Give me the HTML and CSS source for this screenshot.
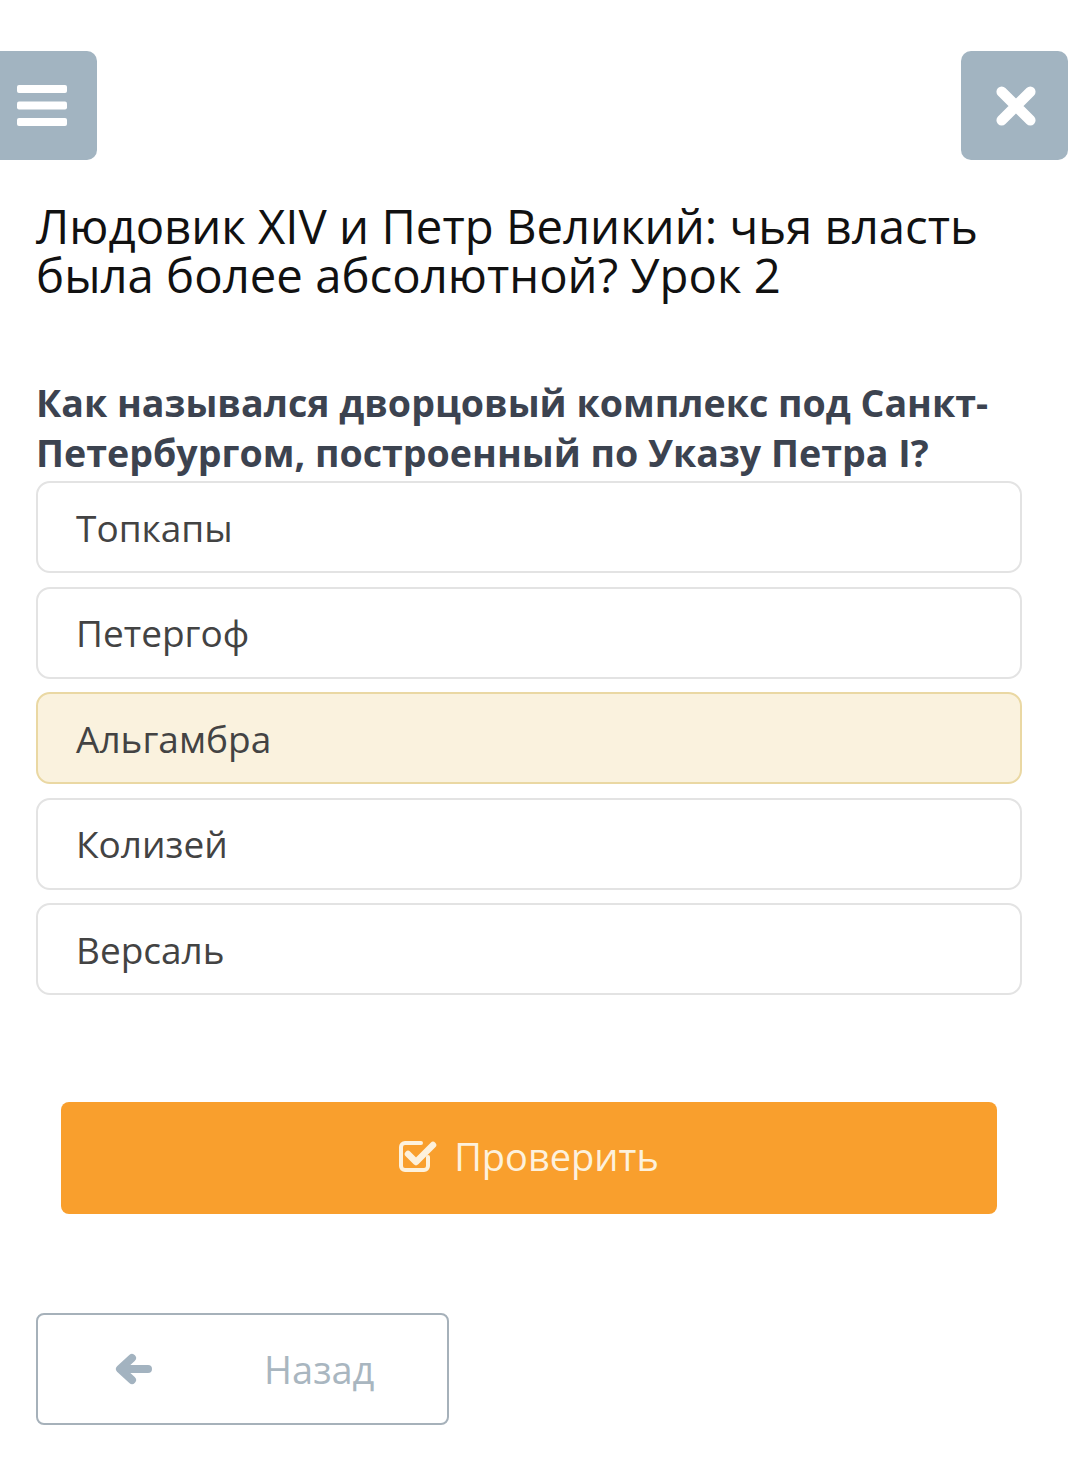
FILE: index.html
```html
<!DOCTYPE html>
<html lang="ru">
<head>
<meta charset="utf-8">
<link rel="stylesheet" href="styles.css">
</head>
<body>
<div class="topbar">
  <div class="icon-btn menu-btn">
    <svg width="50" height="42" viewBox="0 0 50 42"><rect x="0" y="0" width="50" height="8" rx="2" fill="#fff"/><rect x="0" y="16.5" width="50" height="8" rx="2" fill="#fff"/><rect x="0" y="33" width="50" height="8" rx="2" fill="#fff"/></svg>
  </div>
  <div class="icon-btn close-btn">
    <svg width="42" height="42" viewBox="0 0 44 44"><path d="M7 7 L37 37 M37 7 L7 37" stroke="#fff" stroke-width="11" stroke-linecap="round"/></svg>
  </div>
</div>
<main class="content">
  <h1 class="title">Людовик XIV и Петр Великий: чья власть была более абсолютной? Урок 2</h1>
  <p class="question">Как назывался дворцовый комплекс под Санкт-Петербургом, построенный по Указу Петра I?</p>
  <div class="options">
    <div class="option">Топкапы</div>
    <div class="option">Петергоф</div>
    <div class="option selected">Альгамбра</div>
    <div class="option">Колизей</div>
    <div class="option">Версаль</div>
  </div>
  <button class="check-btn">
    <svg width="38" height="34" viewBox="0 0 38 34"><path d="M29 18 V27 a4 4 0 0 1 -4 4 H6 a4 4 0 0 1 -4 -4 V8 a4 4 0 0 1 4 -4 H22" fill="none" stroke="#fdf1dc" stroke-width="4" stroke-linecap="round"/><path d="M9 15 L17 23 L34 6" fill="none" stroke="#fdf1dc" stroke-width="6.5" stroke-linecap="round" stroke-linejoin="round"/></svg>
    <span>Проверить</span>
  </button>
  <button class="back-btn">
    <svg width="38" height="32" viewBox="0 0 38 32"><path d="M34 16 H8 M18 5 L6 16 L18 27" fill="none" stroke="#a3b3c0" stroke-width="8" stroke-linecap="round" stroke-linejoin="round"/></svg>
    <span>Назад</span>
  </button>
</main>
</body>
</html>
```

FILE: styles.css
```css
html, body {
  margin: 0;
  padding: 0;
  background: #ffffff;
  font-family: "Open Sans", "Noto Sans", sans-serif;
}

.topbar {
  display: flex;
  justify-content: space-between;
  margin-top: 51px;
}

.icon-btn {
  box-sizing: border-box;
  width: 107px;
  height: 109px;
  background: #a2b4c1;
  border-radius: 10px;
  display: flex;
  align-items: center;
  justify-content: flex-start;
}

.menu-btn {
  margin-left: -10px;
  padding-left: 27px;
}

.close-btn {
  padding-left: 34px;
}

.content {
  padding: 0 46px 0 36px;
}

.title {
  margin: 41px 0 0;
  font-size: 47.3px;
  line-height: 49px;
  font-weight: 400;
  color: #111;
  padding-right: 20px;
}

.question {
  margin: 79px 0 3px;
  font-size: 37.6px;
  line-height: 50px;
  font-weight: 700;
  color: #3c4350;
}

.options {
  display: flex;
  flex-direction: column;
  gap: 13.5px;
}

.option {
  box-sizing: border-box;
  height: 92px;
  border: 2px solid #e3e3e3;
  border-radius: 14px;
  display: flex;
  align-items: center;
  padding-left: 38px;
  font-size: 37px;
  color: #434343;
  background: #fff;
}

.option.selected {
  background: #faf2de;
  border-color: #ead8a3;
}

.check-btn {
  display: flex;
  align-items: center;
  justify-content: center;
  gap: 17px;
  width: calc(100% - 50px);
  height: 112px;
  margin: 107px 25px 0;
  background: #f99f2d;
  border: none;
  border-radius: 8px;
  font-family: "Open Sans", "Noto Sans", sans-serif;
  font-size: 38px;
  color: #fdf1dc;
  padding: 0 0 4px;
}

.back-btn {
  display: flex;
  align-items: center;
  width: 413px;
  height: 112px;
  margin: 99px 0 0;
  background: #fff;
  border: 2px solid #a6b1ba;
  border-radius: 8px;
  font-family: "Open Sans", "Noto Sans", sans-serif;
  font-size: 38px;
  color: #a9b6c0;
  padding: 0 0 0 76px;
  box-sizing: border-box;
}

.back-btn span {
  margin-left: 112px;
}
```
